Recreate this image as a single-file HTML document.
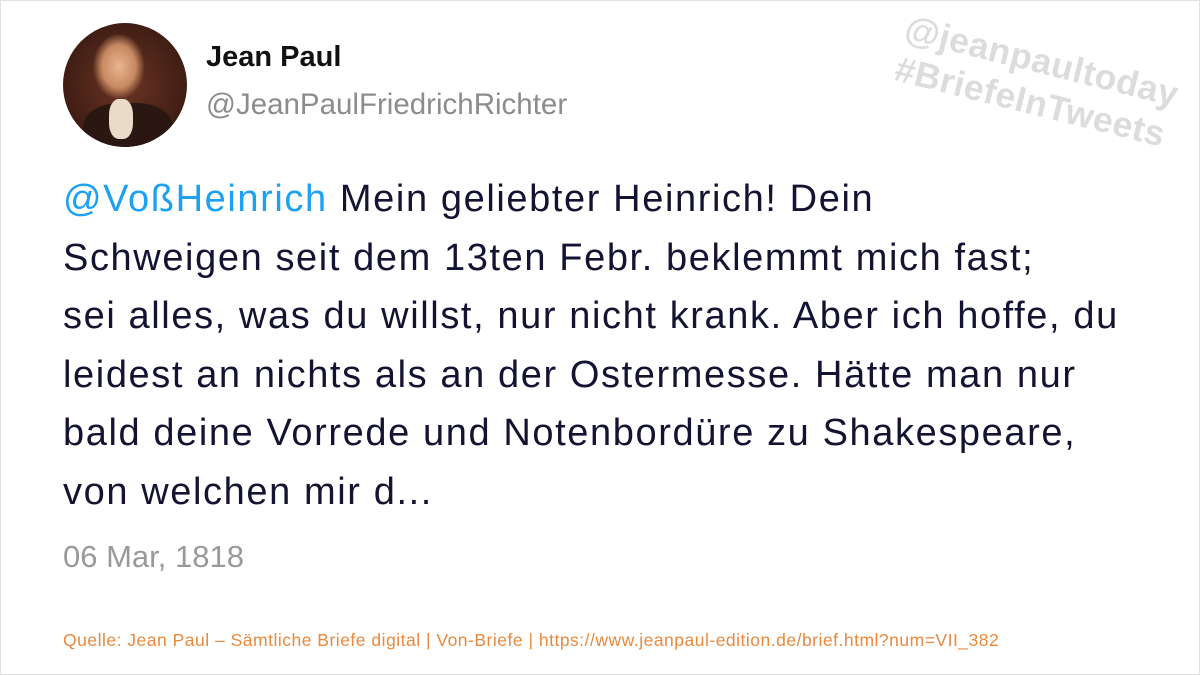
<!DOCTYPE html>
<html><head><meta charset="utf-8"><style>
html,body{margin:0;padding:0}
body{width:1200px;height:675px;background:#fff;position:relative;overflow:hidden;font-family:"Liberation Sans",sans-serif;box-sizing:border-box;border:1px solid #e0e0e0}
.av{position:absolute;left:62px;top:22px;width:124px;height:124px;border-radius:50%;overflow:hidden;background:radial-gradient(ellipse 30% 38% at 45% 35%,#e9b58f 0%,#c78a62 45%,transparent 70%),radial-gradient(circle at 50% 50%,#6b3524,#3a1a12 80%)}
.coat{position:absolute;left:20px;top:80px;width:90px;height:60px;background:#2b1712;border-radius:40% 40% 0 0}
.shirt{position:absolute;left:46px;top:76px;width:24px;height:40px;background:#e8dcc8;border-radius:40%}
.name{position:absolute;left:205px;top:40px;font-weight:bold;font-size:29px;color:#111}
.handle{position:absolute;left:205px;top:87px;font-size:29.5px;color:#8c8c8c}
.wm{position:absolute;left:910px;top:6px;font-weight:bold;font-size:35.5px;color:#dcdcdc;transform:rotate(14deg);transform-origin:0 0;line-height:42px;white-space:nowrap;letter-spacing:0.5px}
.txt{position:absolute;left:62px;top:169px;font-size:38px;letter-spacing:1.6px;line-height:58.5px;color:#141432;white-space:nowrap}
.txt a{color:#1da1f2;text-decoration:none}
.date{position:absolute;left:62px;top:538px;font-size:31px;color:#999}
.src{position:absolute;left:62px;top:629px;font-size:17.5px;color:#e8893c;white-space:nowrap;letter-spacing:0.5px}
</style></head><body>
<div class="av"><div class="coat"></div><div class="shirt"></div></div>
<div class="name">Jean Paul</div>
<div class="handle">@JeanPaulFriedrichRichter</div>
<div class="wm">@jeanpaultoday<br>#BriefeInTweets</div>
<div class="txt"><a>@VoßHeinrich</a> Mein geliebter Heinrich! Dein<br>Schweigen seit dem 13ten Febr. beklemmt mich fast;<br>sei alles, was du willst, nur nicht krank. Aber ich hoffe, du<br>leidest an nichts als an der Ostermesse. Hätte man nur<br>bald deine Vorrede und Notenbordüre zu Shakespeare,<br>von welchen mir d...</div>
<div class="date">06 Mar, 1818</div>
<div class="src">Quelle: Jean Paul – Sämtliche Briefe digital | Von-Briefe | https://www.jeanpaul-edition.de/brief.html?num=VII_382</div>
</body></html>
